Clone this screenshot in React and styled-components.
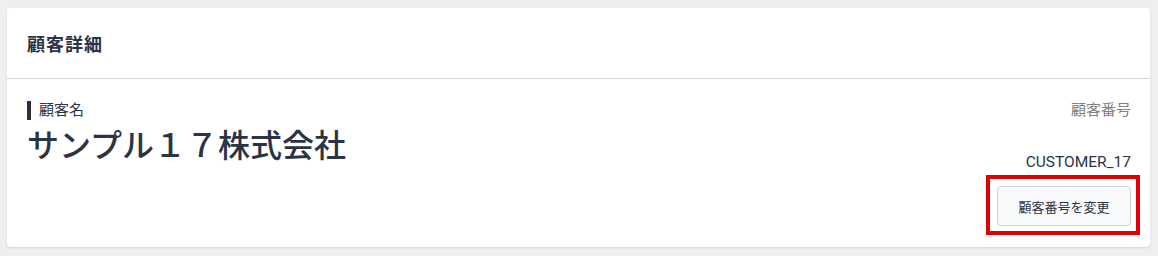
import React from 'react';
import styled, { createGlobalStyle } from 'styled-components';

const textColor = '#2b3445';
const jpFont = `Roboto, "Noto Sans CJK JP", sans-serif`;

const GlobalStyle = createGlobalStyle`
  html, body {
    margin: 0;
    padding: 0;
    background: #eeeff1;
    font-family: ${jpFont};
    color: ${textColor};
  }
`;

const Page = styled.div`
  width: 1158px;
  height: 256px;
  box-sizing: border-box;
  padding: 8px 8px 9px 7px;
`;

const Card = styled.section`
  background: #fff;
  border-radius: 4px;
  box-shadow: 0 1px 2px rgba(0, 0, 0, 0.12);
  height: 100%;
  display: flex;
  flex-direction: column;
`;

const CardHeader = styled.header`
  height: 70px;
  display: flex;
  align-items: center;
  padding: 0 20px;
  border-bottom: 1px solid #d6d6d8;
`;

const CardTitle = styled.h2`
  margin: 0;
  font-size: 18px;
  font-weight: 700;
  letter-spacing: 1px;
`;

const CardBody = styled.div`
  flex: 1;
  display: flex;
  justify-content: space-between;
  padding: 22px 19px 19px 20px;
`;

const LeftColumn = styled.div`
  display: flex;
  flex-direction: column;
`;

const FieldLabel = styled.div`
  display: flex;
  align-items: center;
  gap: 8px;
  font-size: 15px;
  line-height: 19px;
  color: ${textColor};

  &::before {
    content: '';
    width: 4px;
    height: 19px;
    background: #2b313a;
  }
`;

const CompanyName = styled.div`
  margin-top: 6px;
  font-size: 32px;
  font-weight: 500;
  line-height: 40px;
`;

const RightColumn = styled.div`
  display: flex;
  flex-direction: column;
  align-items: flex-end;
`;

const MutedLabel = styled.div`
  font-size: 15px;
  line-height: 19px;
  color: #808080;
`;

const CustomerNumber = styled.div`
  margin-top: 31px;
  font-size: 15.5px;
  line-height: 22px;
`;

const ChangeButton = styled.button`
  position: relative;
  margin-top: 13px;
  height: 40px;
  width: 134px;
  padding: 0;
  font-family: ${jpFont};
  font-size: 13px;
  color: ${textColor};
  background: #f8f9fa;
  border: 1px solid #cfd2d6;
  border-radius: 4px;

  /* red highlight frame drawn over the screenshot */
  &::after {
    content: '';
    position: absolute;
    inset: -12px -10px -10px -12px;
    border: 4px solid #e00000;
    pointer-events: none;
  }
`;

function App () {
  return (
    <Page>
      <GlobalStyle/>
      <Card>
        <CardHeader>
          <CardTitle>顧客詳細</CardTitle>
        </CardHeader>
        <CardBody>
          <LeftColumn>
            <FieldLabel>顧客名</FieldLabel>
            <CompanyName>サンプル１７株式会社</CompanyName>
          </LeftColumn>
          <RightColumn>
            <MutedLabel>顧客番号</MutedLabel>
            <CustomerNumber>CUSTOMER_17</CustomerNumber>
            <ChangeButton type='button'>顧客番号を変更</ChangeButton>
          </RightColumn>
        </CardBody>
      </Card>
    </Page>
  );
}

export default App;
